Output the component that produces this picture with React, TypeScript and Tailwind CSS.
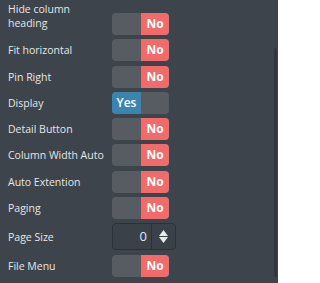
import React from "react";

function Toggle({ on }: { on: boolean }) {
  return (
    <div className="flex h-[22px] w-[57px] overflow-hidden rounded-[4px] bg-[#575c63] text-[12px] font-bold text-white">
      {on ? (
        <>
          <div className="flex w-[29px] items-center justify-center bg-[#3b84ad] font-semibold">Yes</div>
          <div className="flex-1" />
        </>
      ) : (
        <>
          <div className="w-[29px]" />
          <div className="flex flex-1 items-center justify-center bg-[#f26b6b]">No</div>
        </>
      )}
    </div>
  );
}

function Row({ label, children }: { label: string; children: React.ReactNode }) {
  return (
    <div className="flex items-center">
      <div className="w-[112px] whitespace-nowrap pl-2 leading-[14px]">{label}</div>
      {children}
    </div>
  );
}

export default function App() {
  return (
    <div
      className="relative h-[283px] w-[278px] overflow-hidden bg-[#3e444b] text-[10.5px] text-[#e4e6e8]"
      style={{ fontFamily: '"Open Sans", sans-serif' }}
    >
      <div className="flex flex-col gap-[4.3px]">
        <div className="flex items-start">
          <div className="w-[84px] pl-2 pt-[2px] leading-[14px]">Hide column heading</div>
          <div className="ml-[28px] mt-[13px]">
            <Toggle on={false} />
          </div>
        </div>
        <Row label="Fit horizontal"><Toggle on={false} /></Row>
        <Row label="Pin Right"><Toggle on={false} /></Row>
        <Row label="Display"><Toggle on={true} /></Row>
        <Row label="Detail Button"><Toggle on={false} /></Row>
        <Row label="Column Width Auto"><Toggle on={false} /></Row>
        <Row label="Auto Extention"><Toggle on={false} /></Row>
        <Row label="Paging"><Toggle on={false} /></Row>
        <Row label="Page Size">
          <div className="flex h-[27px] w-[64px] rounded-[4px] border border-[#2c3137] bg-[#3b4148]">
            <div className="flex flex-1 items-center justify-end pr-[4px] text-[13px] text-[#dfe8f0]">0</div>
            <div className="flex w-[24px] flex-col items-center justify-center gap-[1px] border-l border-[#2c3137]">
              <svg width="9" height="6" viewBox="0 0 9 6"><path d="M4.5 0L9 6H0Z" fill="#e8ecef" /></svg>
              <svg width="9" height="6" viewBox="0 0 9 6"><path d="M0 0H9L4.5 6Z" fill="#e8ecef" /></svg>
            </div>
          </div>
        </Row>
        <Row label="File Menu"><Toggle on={false} /></Row>
      </div>
      <div className="absolute right-[1px] top-[48px] h-[229px] w-[3px] rounded-[2px] bg-[#32373e]" />
    </div>
  );
}
